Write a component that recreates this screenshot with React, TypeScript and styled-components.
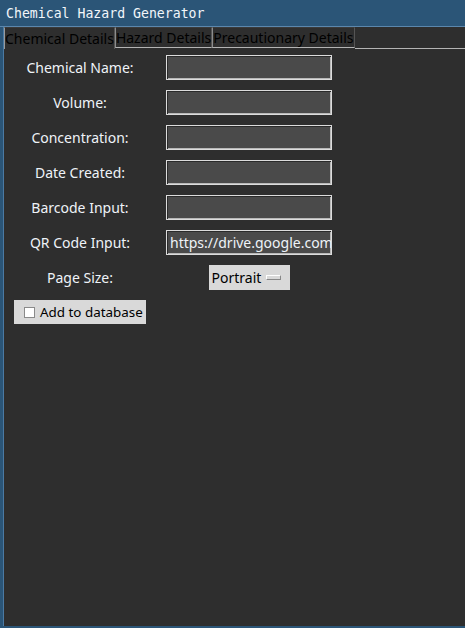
import React from "react";
import styled, { createGlobalStyle } from "styled-components";

const Global = createGlobalStyle`
  html, body { margin: 0; padding: 0; background: #2d2d2d; }
  body { width: 465px; height: 628px; overflow: hidden; }
`;

const Window = styled.div`
  width: 465px;
  height: 628px;
  display: flex;
  flex-direction: column;
  background: #2e2e2e;
  overflow: hidden;
`;

const TitleBar = styled.div`
  height: 27px;
  flex: none;
  background: #2b5577;
  border-bottom: 1px solid #5b87ad;
  display: flex;
  align-items: center;
  padding-left: 6px;
  padding-top: 1px;
  box-sizing: border-box;
  font-family: "DejaVu Sans Mono", monospace;
  font-size: 13.2px;
  color: #f2f6fa;
`;

const Frame = styled.div`
  flex: 1;
  display: flex;
  flex-direction: column;
  border-left: 3px solid #2b5577;
  border-bottom: 2px solid #2b5577;
  box-shadow: inset 1px 0 0 #4b7aa3;
  min-height: 0;
`;

const TabStrip = styled.div`
  display: flex;
  height: 22px;
  flex: none;
  padding-left: 1px;
`;

const Tab = styled.div<{ $active?: boolean }>`
  box-sizing: border-box;
  height: ${(p) => (p.$active ? "22px" : "21px")};
  padding: 0;
  display: flex;
  align-items: center;
  font-family: "Noto Sans", sans-serif;
  font-size: 14px;
  color: #000;
  white-space: nowrap;
  border-left: 1px solid ${(p) => (p.$active ? "#9a9a9a" : "#8c8c8c")};
  border-right: 1px solid #555;
  border-top: 1px solid #3a3a3a;
  border-bottom: ${(p) => (p.$active ? "none" : "1px solid #b4b4b4")};
`;

const TabFiller = styled.div`
  flex: 1;
  height: 21px;
  border-bottom: 1px solid #b4b4b4;
`;

const Form = styled.div`
  display: grid;
  grid-template-columns: 132px 186px;
  grid-auto-rows: 25px;
  column-gap: 10px;
  row-gap: 10px;
  padding: 6px 0 0 11px;
  font-family: "Noto Sans", sans-serif;
  font-size: 14px;
`;

const Label = styled.div`
  display: flex;
  align-items: center;
  justify-content: center;
  color: #eef3f8;
  white-space: nowrap;
`;

const Cell = styled.div`
  display: flex;
  align-items: center;
  justify-content: center;
`;

const Entry = styled.input`
  box-sizing: border-box;
  width: 166px;
  height: 25px;
  margin: 0;
  padding: 0 0 0 3px;
  background: #4a4a4a;
  border: 1px solid #dcdcdc;
  box-shadow: inset 1px 1px 0 #2a2a2a, inset -1px -1px 0 #b8b8b8;
  outline: none;
  font-family: "Noto Sans", sans-serif;
  font-size: 14px;
  color: #eef3f8;
`;

const OptionMenu = styled.div`
  box-sizing: border-box;
  width: 81px;
  height: 25px;
  background: #d9d9d9;
  display: flex;
  align-items: center;
  padding-left: 3px;
  gap: 5px;
  color: #000;
  font-size: 14px;
`;

const Indicator = styled.span`
  box-sizing: border-box;
  width: 15px;
  height: 5px;
  background: #d9d9d9;
  border-top: 1px solid #fff;
  border-left: 1px solid #fff;
  border-bottom: 1px solid #888;
  border-right: 1px solid #888;
`;

const CheckWrap = styled.label`
  box-sizing: border-box;
  width: 132px;
  height: 24px;
  background: #d9d9d9;
  display: flex;
  align-items: center;
  padding-left: 10px;
  gap: 5px;
  color: #000;
  font-size: 13.4px;
  white-space: nowrap;
`;

const Box = styled.span`
  box-sizing: border-box;
  width: 11px;
  height: 11px;
  background: #fff;
  border: 1px solid #8a8a8a;
  flex: none;
`;

const fields = [
  "Chemical Name:",
  "Volume:",
  "Concentration:",
  "Date Created:",
  "Barcode Input:",
];

export default function App() {
  return (
    <>
      <Global />
      <Window>
        <TitleBar>Chemical Hazard Generator</TitleBar>
        <Frame>
          <TabStrip>
            <Tab $active>Chemical Details</Tab>
            <Tab>Hazard Details</Tab>
            <Tab>Precautionary Details</Tab>
            <TabFiller />
          </TabStrip>
          <Form>
            {fields.map((f) => (
              <React.Fragment key={f}>
                <Label>{f}</Label>
                <Cell>
                  <Entry defaultValue="" />
                </Cell>
              </React.Fragment>
            ))}
            <Label>QR Code Input:</Label>
            <Cell>
              <Entry defaultValue="https://drive.google.com/" />
            </Cell>
            <Label>Page Size:</Label>
            <Cell>
              <OptionMenu>
                Portrait
                <Indicator />
              </OptionMenu>
            </Cell>
            <CheckWrap>
              <Box />
              Add to database
            </CheckWrap>
          </Form>
        </Frame>
      </Window>
    </>
  );
}
